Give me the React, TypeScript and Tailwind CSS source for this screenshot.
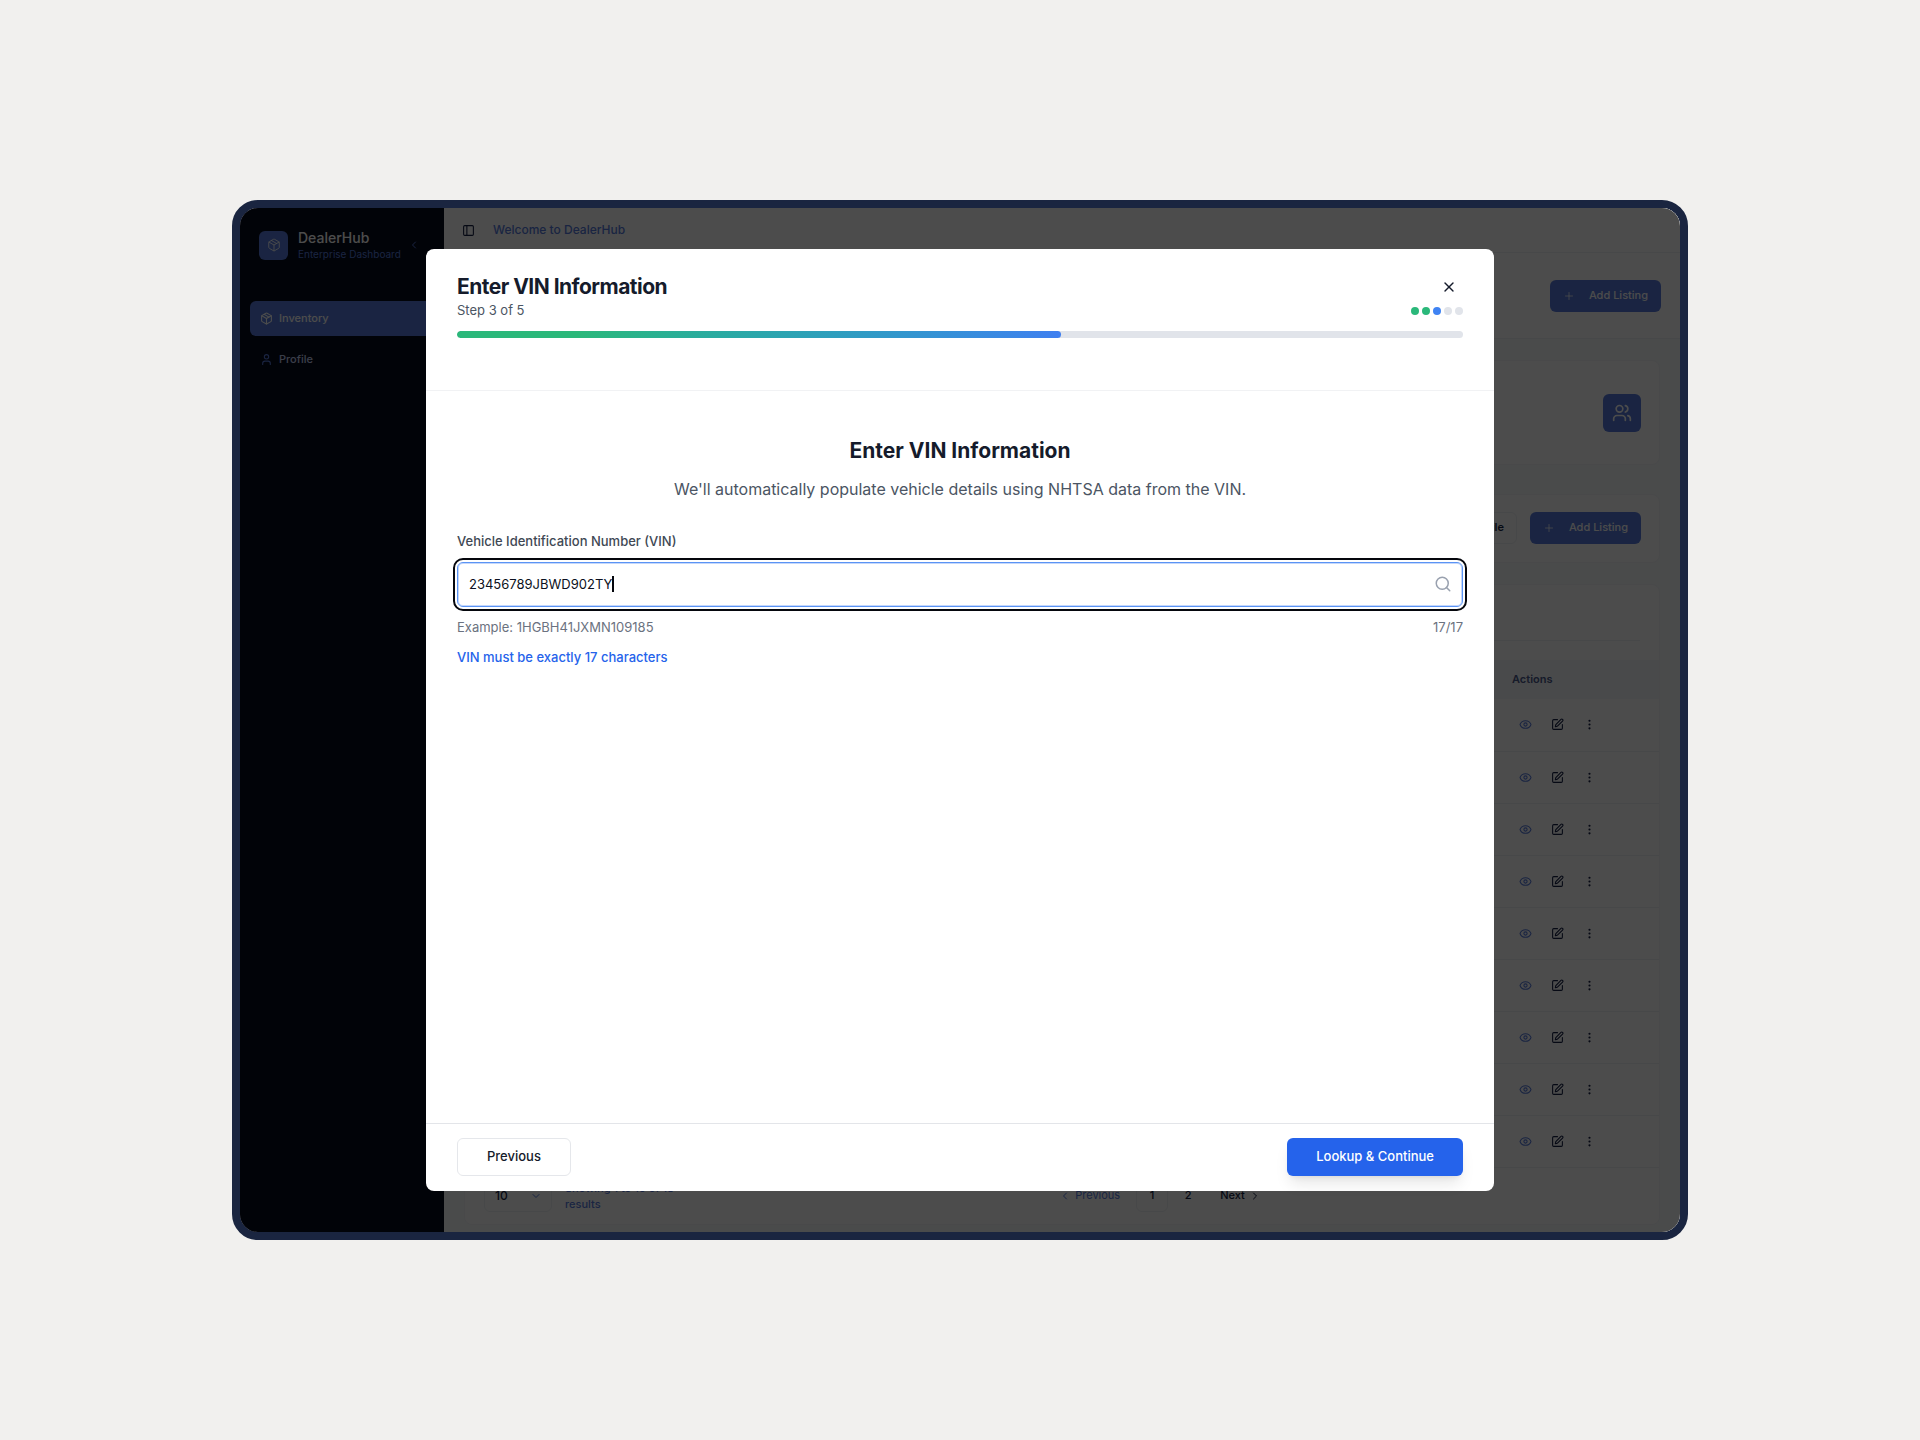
import { useState } from 'react';
import {
  ChevronDown,
  ChevronLeft,
  ChevronRight,
  EllipsisVertical,
  Eye,
  Package,
  PanelLeft,
  Plus,
  Search,
  SquarePen,
  User,
  Users,
  X,
} from 'lucide-react';

const VIN_LENGTH = 17;
const TOTAL_STEPS = 5;
const CURRENT_STEP = 3;
const ROWS = [1, 2, 3, 4, 5, 6, 7, 8, 9];

export default function App() {
  return (
    <div className="min-h-screen bg-[#f1f0ee] px-[232px] py-[200px] font-[Inter,sans-serif]">
      <div className="relative overflow-hidden rounded-[26px] border-8 border-[#1a2540]">
        <div className="flex">
          <Sidebar />
          <div className="flex min-w-0 flex-1 flex-col bg-[#f8fafc]">
            <TopBar />
            <Inventory />
          </div>
        </div>

        {/* Overlay + dialog */}
        <div className="absolute inset-0 flex items-center justify-center bg-black/70">
          <VinDialog />
        </div>
      </div>
    </div>
  );
}

function Sidebar() {
  return (
    <aside className="w-[204px] shrink-0 bg-[#060a1b] px-[10px] pt-[21px]">
      <div className="flex items-center pr-[14px] pl-[9px]">
        <div className="flex size-[29px] items-center justify-center rounded-md bg-[#577bdc] text-white">
          <Package size={14} strokeWidth={1.5} />
        </div>
        <div className="ml-[10px] flex-1">
          <p className="text-[14px] leading-[18px] font-medium text-white">DealerHub</p>
          <p className="text-[10px] leading-[14px] whitespace-nowrap text-[#577bdc]">Enterprise Dashboard</p>
        </div>
        <button type="button" aria-label="Collapse sidebar" className="text-[#577bdc]">
          <ChevronLeft size={12} />
        </button>
      </div>
      <nav className="mt-[40px] flex flex-col gap-[6px]">
        <a href="#inventory" className="flex h-[35px] items-center gap-[6px] rounded-md bg-[#577bdc] px-[10px] text-[11px] font-medium text-white">
          <Package size={13} />
          Inventory
        </a>
        <a href="#profile" className="flex h-[35px] items-center gap-[6px] rounded-md px-[10px] text-[11px] font-medium text-[#c3d0f3]">
          <User size={13} className="text-[#577bdc]" />
          Profile
        </a>
      </nav>
    </aside>
  );
}

function TopBar() {
  return (
    <header className="flex h-[45px] items-center gap-[18px] border-b border-[#eef1f5] bg-white px-[18px]">
      <button type="button" aria-label="Toggle sidebar" className="text-[#141e43]">
        <PanelLeft size={13} />
      </button>
      <span className="text-[12px] font-medium text-[#577bdc]">Welcome to DealerHub</span>
    </header>
  );
}

function AddListingButton() {
  return (
    <button type="button" className="flex h-8 w-[111px] items-center justify-between rounded-md bg-[#577bdc] px-[13px] text-[11px] font-medium text-white">
      <Plus size={12} strokeWidth={1.5} />
      Add Listing
    </button>
  );
}

function Inventory() {
  return (
    <>
      <div className="flex h-[86px] items-center justify-end border-b border-[#eef1f5] bg-white px-[19px]">
        <AddListingButton />
      </div>

      <main className="px-5 pt-[21px] pb-[7px]">
        <section className="flex h-[105px] items-center justify-end rounded-lg border border-[#f4f6f8] bg-white px-[18px]">
          <div className="flex size-[38px] items-center justify-center rounded-md bg-[#577bdc] text-white">
            <Users size={20} strokeWidth={2} />
          </div>
        </section>

        <section className="mt-[29px] flex h-[69px] items-center justify-end gap-[13px] rounded-lg border border-[#f4f6f8] bg-white px-[18px] pb-[2px]">
          <button type="button" className="h-8 rounded-md border border-[#eef1f5] px-3 text-[11px] font-semibold text-[#141e43]">
            Import File
          </button>
          <AddListingButton />
        </section>

        <section className="mt-[21px] rounded-lg border border-[#f4f6f8] bg-white">
          <div className="h-[75px] px-[19px]">
            <div className="h-[56px] border-b border-[#eef1f5]" />
          </div>
          <table className="w-full text-left">
            <thead className="bg-[#f6f8fa]">
              <tr className="h-[39px]">
                <th />
                <th className="w-[147px] text-[11px] font-semibold text-[#4a5a8c]">Actions</th>
              </tr>
            </thead>
            <tbody>
              {ROWS.map((row) => (
                <tr key={row} className="h-[52px] border-b border-[#eef1f5]">
                  <td />
                  <td>
                    <div className="flex items-center gap-[19px] pl-[7px] text-[#141e43]">
                      <button type="button" aria-label="View listing" className="text-[#577bdc]">
                        <Eye size={13} />
                      </button>
                      <button type="button" aria-label="Edit listing">
                        <SquarePen size={13} />
                      </button>
                      <button type="button" aria-label="More actions">
                        <EllipsisVertical size={13} />
                      </button>
                    </div>
                  </td>
                </tr>
              ))}
            </tbody>
          </table>
          <Pagination />
        </section>
      </main>
    </>
  );
}

function Pagination() {
  return (
    <div className="flex h-14 items-center px-[19px] text-[11px] font-medium text-[#141e43]">
      <div className="relative w-[68px]">
        <select aria-label="Rows per page" defaultValue="10" className="h-8 w-full appearance-none rounded-md border border-[#eef1f5] px-[10px] text-[12px]">
          <option value="10">10</option>
          <option value="20">20</option>
        </select>
        <ChevronDown size={12} className="absolute top-[10px] right-[10px] text-[#577bdc]" />
      </div>
      <p className="ml-[13px] w-[115px] leading-4 text-[#577bdc]">Showing 1 to 10 of 18 results</p>
      <nav className="mx-auto flex items-center">
        <button type="button" className="flex items-center gap-1 font-normal text-[#577bdc]">
          <ChevronLeft size={12} />
          Previous
        </button>
        <button type="button" className="ml-4 size-8 rounded-md border border-[#eef1f5]">1</button>
        <button type="button" className="ml-1 size-8">2</button>
        <button type="button" className="ml-4 flex items-center gap-1">
          Next
          <ChevronRight size={12} />
        </button>
      </nav>
    </div>
  );
}

function VinDialog() {
  const [vin, setVin] = useState('23456789JBWD902TY');

  return (
    <div role="dialog" aria-labelledby="vin-title" className="flex h-[92%] w-3/4 max-w-[1068px] flex-col rounded-lg bg-white">
      <header className="h-[142px] border-b border-[#f1f2f4] px-[31px] pt-[23px]">
        <div className="flex h-[30px] items-center justify-between">
          <h1 id="vin-title" className="text-[21px] font-bold tracking-tight text-[#151b2b]">Enter VIN Information</h1>
          <button type="button" aria-label="Close" className="mr-[6px] text-[#151b2b]">
            <X size={16} />
          </button>
        </div>
        <div className="flex h-[18px] items-center justify-between">
          <p className="text-[13px] text-[#4b5563]">Step 3 of 5</p>
          <div className="flex gap-[3px]">
            {Array.from({ length: TOTAL_STEPS }, (_, i) => (
              <span
                key={i}
                className={`size-2 rounded-full ${
                  i + 1 < CURRENT_STEP ? 'bg-[#2bb87a]' : i + 1 === CURRENT_STEP ? 'bg-[#3f83f3]' : 'bg-[#e1e4ea]'
                }`}
              />
            ))}
          </div>
        </div>
        <div className="mt-[11px] h-[7px] overflow-hidden rounded-full bg-[#e1e4ea]">
          <div
            className="h-full rounded-full bg-linear-to-r from-[#2bb87a] from-20% to-[#3f7ff0]"
            style={{ width: `${(CURRENT_STEP / TOTAL_STEPS) * 100}%` }}
          />
        </div>
      </header>

      <div className="flex-1 px-[31px] pt-[44px]">
        <div className="text-center">
          <h2 className="text-[21px] leading-8 font-bold text-[#151b2b]">Enter VIN Information</h2>
          <p className="mt-[10px] text-[16px] leading-6 text-[#4b5563]">
            We'll automatically populate vehicle details using NHTSA data from the VIN.
          </p>
        </div>

        <label htmlFor="vin" className="mt-[30px] block text-[13px] leading-5 font-medium text-[#404854]">
          Vehicle Identification Number (VIN)
        </label>
        <div className="mt-[11px] flex h-[45px] items-center rounded-md border border-[#5b94f5] pr-[10px] pl-[11px] inset-ring inset-ring-[#c4d7fb] outline-2 outline-offset-2 outline-[#05070d]">
          <input
            id="vin"
            type="text"
            value={vin}
            maxLength={VIN_LENGTH}
            onChange={(e) => setVin(e.target.value.toUpperCase())}
            className="field-sizing-content text-[13px] text-[#0b1020] caret-transparent outline-none"
          />
          {/* text cursor */}
          <span className="h-4 w-[2px] bg-[#05070d]" />
          <Search size={18} strokeWidth={2} className="ml-auto text-[#99a1af]" />
        </div>
        <div className="mt-[10px] flex justify-between text-[13px] leading-5 text-[#6b7280]">
          <span>Example: 1HGBH41JXMN109185</span>
          <span>{vin.length}/{VIN_LENGTH}</span>
        </div>
        <p className="mt-[10px] text-[13px] leading-5 font-medium text-[#2563eb]">VIN must be exactly 17 characters</p>
      </div>

      <footer className="flex h-[68px] items-center justify-between border-t border-[#e3e5e9] px-[31px]">
        <button type="button" className="h-[38px] rounded-md border border-[#e5e7eb] px-[29px] text-[13px] font-medium text-[#151b2b]">
          Previous
        </button>
        <button type="button" className="h-[38px] rounded-md bg-[#2563eb] px-[29px] text-[13px] font-medium text-white shadow-lg shadow-black/10">
          Lookup &amp; Continue
        </button>
      </footer>
    </div>
  );
}
